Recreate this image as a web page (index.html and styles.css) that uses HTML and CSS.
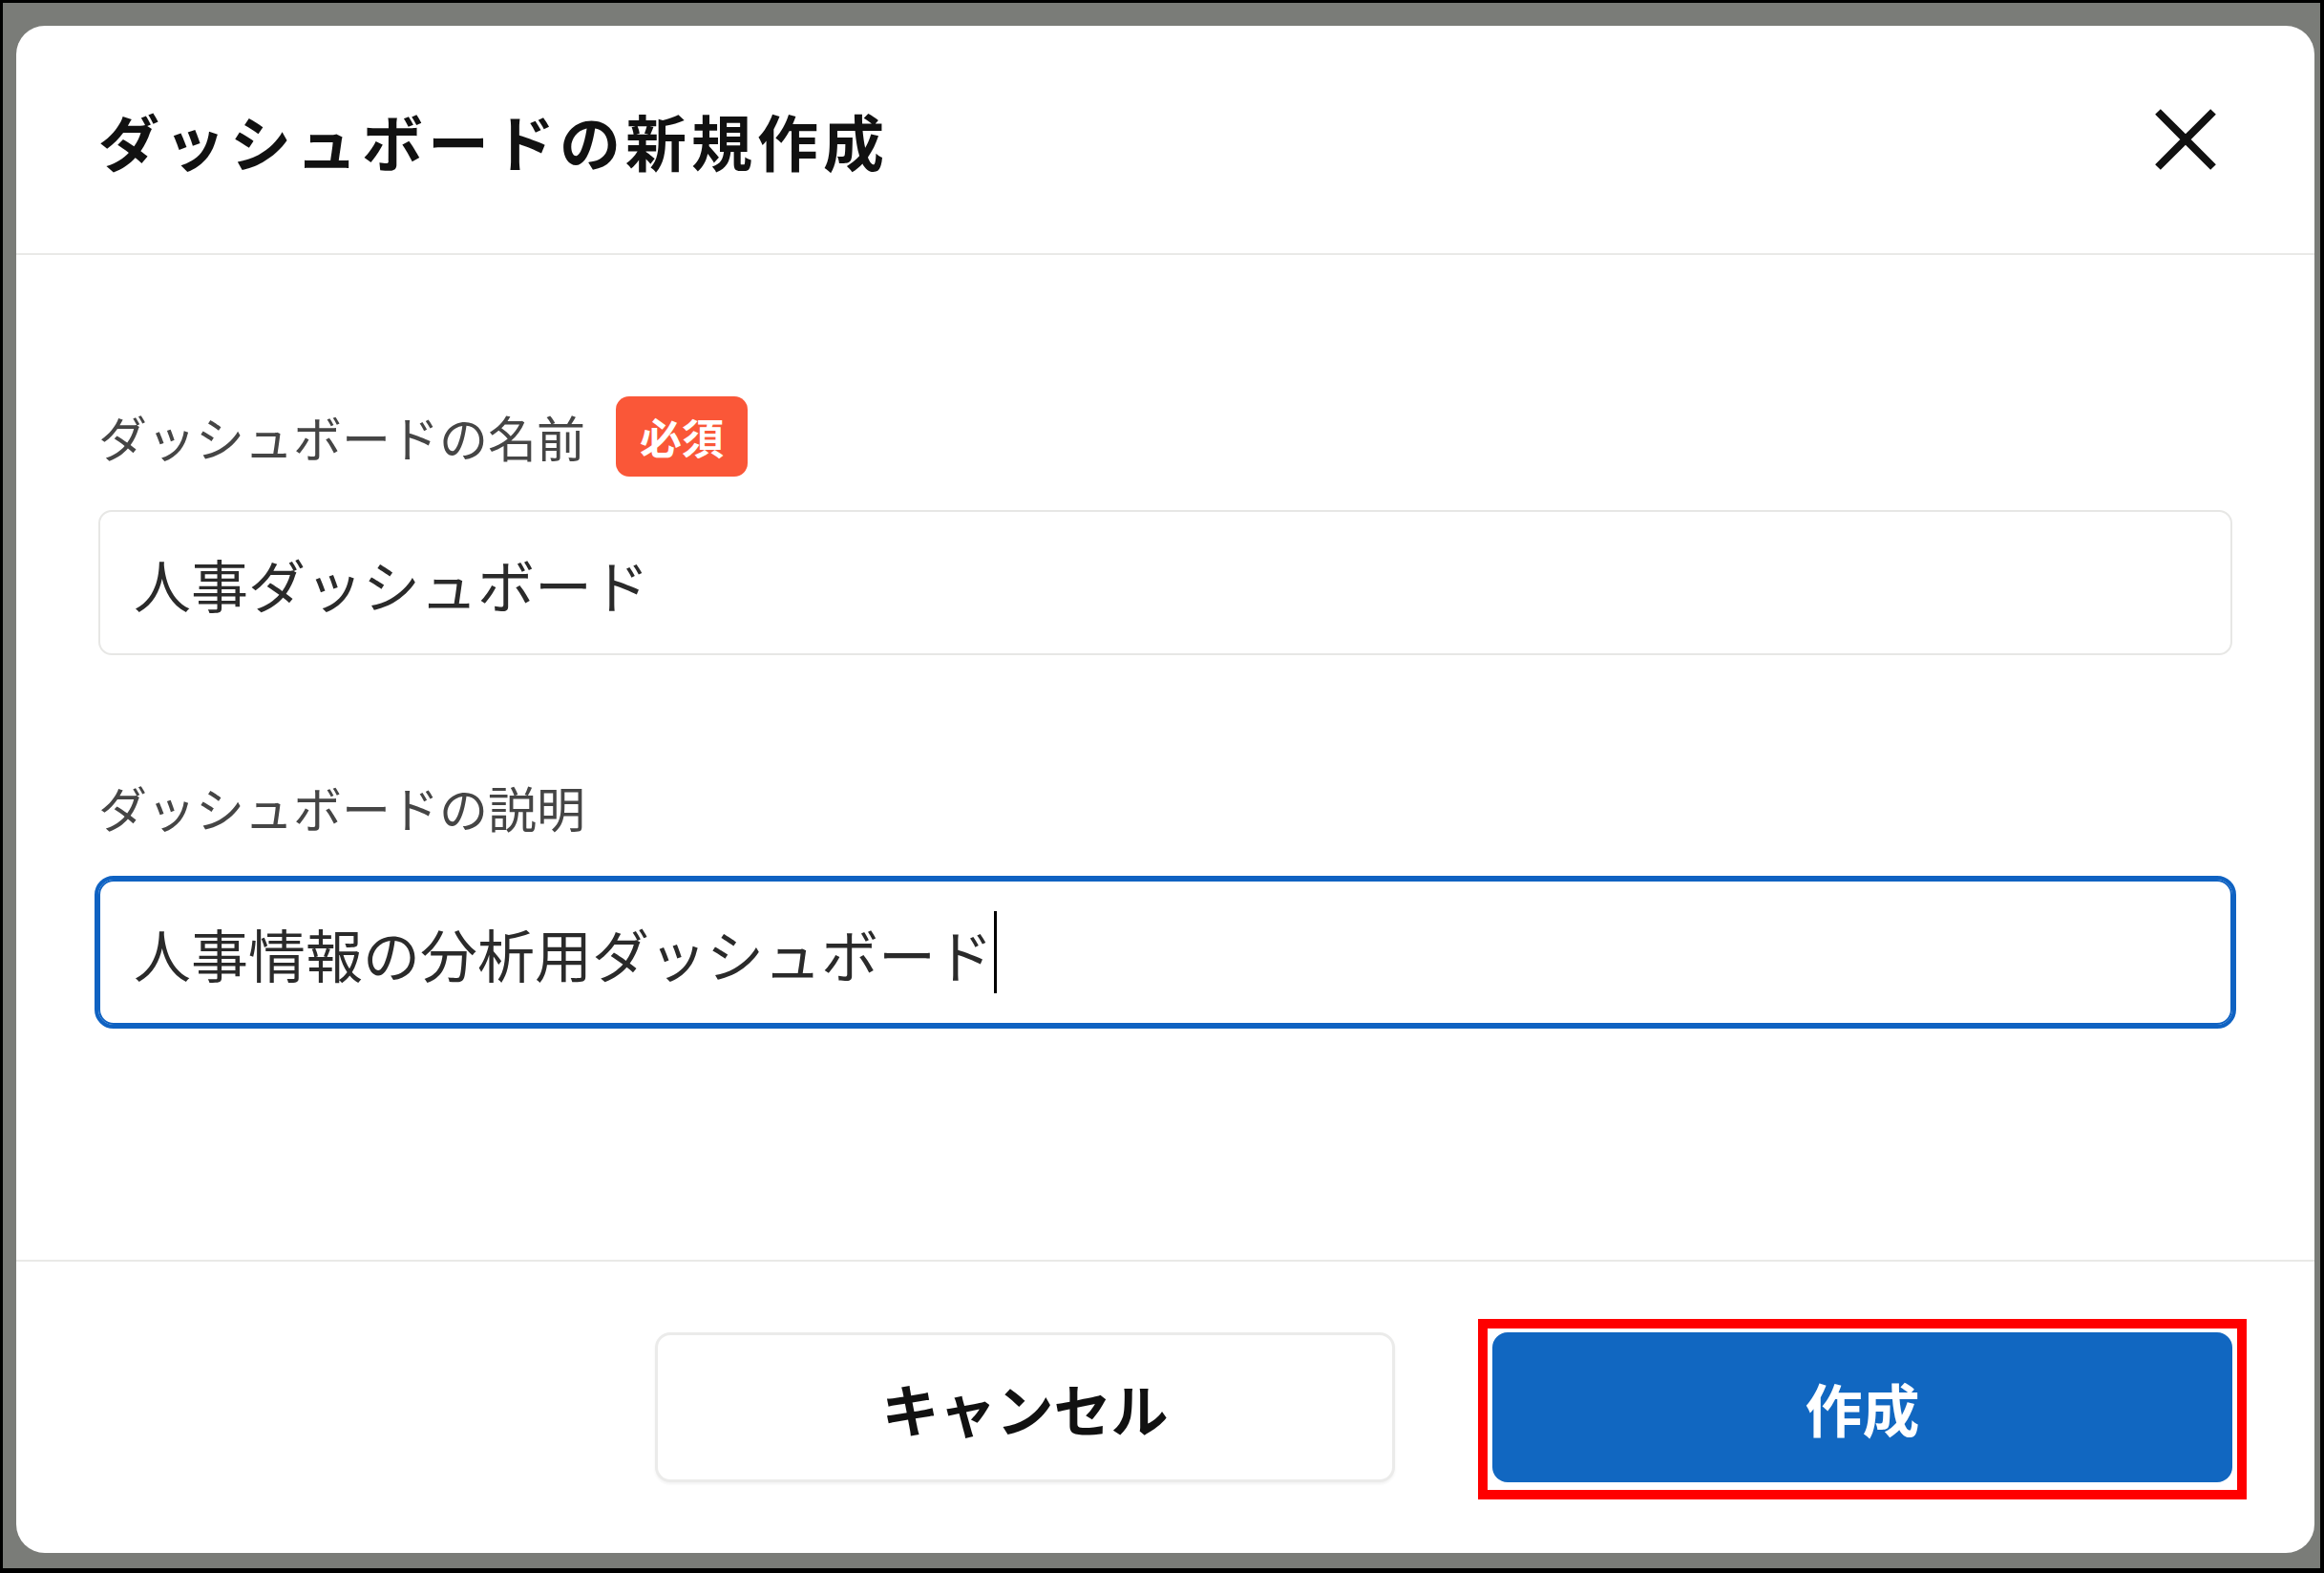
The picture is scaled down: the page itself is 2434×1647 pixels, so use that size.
FILE: index.html
```html
<!DOCTYPE html>
<html lang="ja">
<head>
<meta charset="utf-8">
<title>ダッシュボードの新規作成</title>
<link rel="stylesheet" href="styles.css">
</head>
<body>
<div class="screen">
  <div class="modal">
    <div class="modal-header">
      <h1 class="modal-title">ダッシュボードの新規作成</h1>
      <button class="close-btn" aria-label="閉じる">
        <svg width="64" height="64" viewBox="0 0 64 64" aria-hidden="true">
          <path d="M3 3 L61 61 M61 3 L3 61" stroke="#111" stroke-width="8" fill="none"/>
        </svg>
      </button>
    </div>
    <div class="modal-body">
      <div class="form-group">
        <div class="label-row">
          <span class="label">ダッシュボードの名前</span>
          <span class="badge">必須</span>
        </div>
        <div class="field">人事ダッシュボード</div>
      </div>
      <div class="form-group second">
        <div class="label-row">
          <span class="label">ダッシュボードの説明</span>
        </div>
        <div class="field focused">人事情報の分析用ダッシュボード<span class="caret"></span></div>
      </div>
    </div>
    <div class="modal-footer">
      <button class="btn btn-cancel">キャンセル</button>
      <div class="btn-wrap">
        <button class="btn btn-primary">作成</button>
        <span class="highlight"></span>
      </div>
    </div>
  </div>
</div>
</body>
</html>
```

FILE: styles.css
```css
* {
  box-sizing: border-box;
}

html, body {
  margin: 0;
  padding: 0;
  background: #000;
}

body {
  font-family: "Noto Sans CJK JP", "Noto Sans", sans-serif;
}

.screen {
  width: 2434px;
  height: 1647px;
  border-style: solid;
  border-color: #000;
  border-width: 3px 4px 5px 3px;
  background: #7a7c78;
  padding: 24px 6px 16px 14px;
  display: flex;
}

.modal {
  flex: 1;
  background: #fff;
  border-radius: 30px;
  display: flex;
  flex-direction: column;
  overflow: hidden;
}

.modal-header {
  height: 240px;
  flex: none;
  border-bottom: 2px solid #e9e9e7;
  display: flex;
  align-items: center;
  justify-content: space-between;
  padding: 0 103px 0 86px;
}

.modal-title {
  margin: 0;
  font-size: 64px;
  font-weight: 700;
  color: #111;
  letter-spacing: 5px;
  line-height: 1.2;
}

.close-btn {
  background: none;
  border: 0;
  padding: 0;
  width: 64px;
  height: 64px;
  display: block;
}

.close-btn svg {
  display: block;
}

.modal-body {
  flex: 1;
  padding: 148px 86px 0 86px;
}

.form-group.second {
  margin-top: 117px;
}

.label-row {
  height: 84px;
  display: flex;
  align-items: center;
  margin-bottom: 35px;
}

.form-group.second .label-row {
  margin-bottom: 34px;
}

.label {
  font-size: 51px;
  color: #454545;
  line-height: 84px;
}

.badge {
  margin-left: 32px;
  height: 84px;
  padding: 0 25px;
  border-radius: 14px;
  background: #fa5738;
  color: #fff;
  font-size: 44px;
  font-weight: 700;
  display: flex;
  align-items: center;
}

.field {
  height: 152px;
  border: 2px solid #e7e7e5;
  border-radius: 14px;
  padding: 0 35px;
  font-size: 60px;
  color: #2a2a2a;
  display: flex;
  align-items: center;
  white-space: nowrap;
}

.field.focused {
  border-color: #0f62c2;
  outline: 4px solid #0f62c2;
  border-radius: 16px;
}

.caret {
  display: inline-block;
  width: 3px;
  height: 86px;
  background: #000;
  margin-left: 1px;
}

.modal-footer {
  flex: none;
  height: 307px;
  border-top: 2px solid #e9e9e7;
  display: flex;
  justify-content: flex-end;
  align-items: center;
  gap: 102px;
  padding: 0 86px;
}

.btn {
  width: 775px;
  height: 157px;
  border-radius: 16px;
  font-family: "Noto Sans CJK JP", "Noto Sans", sans-serif;
  font-size: 60px;
  font-weight: 700;
  display: flex;
  align-items: center;
  justify-content: center;
  padding: 0;
}

.btn-cancel {
  background: #fff;
  border: 3px solid #ebebea;
  color: #111;
  box-shadow: 0 2px 3px rgba(0, 0, 0, 0.05);
}

.btn-wrap {
  position: relative;
}

.btn-primary {
  background: #1167c1;
  border: 0;
  color: #fff;
}

.highlight {
  position: absolute;
  top: -14px;
  left: -15px;
  right: -15px;
  bottom: -18px;
  border: 10px solid #ff0000;
  pointer-events: none;
}
```
